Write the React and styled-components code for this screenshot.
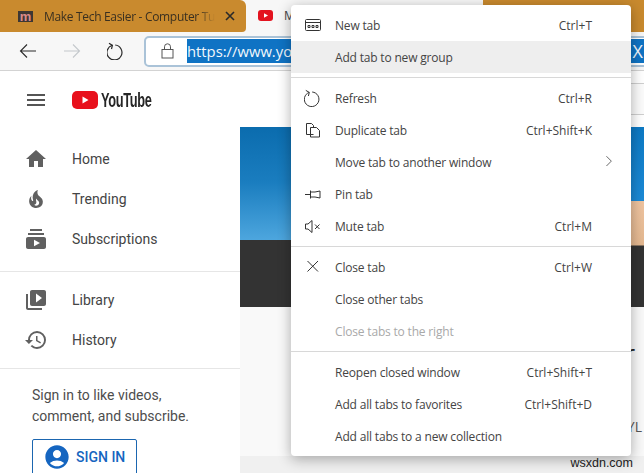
import styled, { createGlobalStyle } from "styled-components";
import {
  MdAccountCircle,
  MdHistory,
  MdHome,
  MdMenu,
  MdSubscriptions,
  MdVideoLibrary,
} from "react-icons/md";

const GlobalStyle = createGlobalStyle`
  html, body {
    margin: 0;
    height: 473px;
    overflow: hidden;
    background: #fff;
  }
`;

const FlameIcon = () => (
  <svg width="24" height="24" viewBox="0 0 24 24" fill="currentColor">
    <path d="M17.53 11.2c-.23-.3-.5-.56-.76-.82-.65-.6-1.4-1.03-2.03-1.66C13.3 7.26 13 4.85 13.91 3c-.91.23-1.75.75-2.45 1.32-2.54 2.08-3.54 5.75-2.34 8.9.04.1.08.2.08.33 0 .22-.15.42-.35.5-.22.1-.46.04-.64-.12-.06-.05-.1-.1-.15-.17-1.1-1.43-1.28-3.48-.53-5.12C5.89 10 5 12.3 5.14 14.47c.04.5.1 1 .27 1.5.14.6.4 1.2.72 1.73 1.04 1.73 2.87 2.97 4.84 3.22 2.1.27 4.35-.12 5.96-1.6 1.8-1.66 2.45-4.32 1.5-6.6l-.13-.26c-.2-.46-.47-.87-.8-1.25zM14.17 18c-.28.24-.73.5-1.08.6-1.1.4-2.2-.16-2.87-.82 1.19-.28 1.9-1.16 2.11-2.05.17-.8-.15-1.46-.28-2.23-.12-.74-.1-1.37.17-2.06.19.38.39.76.63 1.06.77 1 1.98 1.44 2.24 2.8.04.14.06.28.06.43.03.82-.33 1.72-.98 2.27z" />
  </svg>
);

const Line = ({ children, size = 18 }) => (
  <svg width={size} height={size} viewBox="0 0 18 18" fill="none" stroke="currentColor" strokeWidth="1">
    {children}
  </svg>
);

const NewTabIcon = () => (
  <Line>
    <rect x="1.5" y="3.5" width="15" height="11" rx="1" />
    <path d="M1.5 6.5h15" />
    <path d="M4 9.5h2v2H4zM8 9.5h2v2H8zM12 9.5h2v2h-2z" />
  </Line>
);
const RefreshIcon = () => (
  <Line>
    <path d="M5.2 3.4a7.3 7.3 0 1 0 3-.4" />
    <path d="M1.8 1.4 5.3 3.4 4.4 7" />
  </Line>
);
const DuplicateIcon = () => (
  <Line>
    <path d="M9.5 13.5H2.5V2.5h5l2 2v2" />
    <path d="M6.5 6.5h6l3 3v6.5h-9z" />
  </Line>
);
const PinIcon = () => (
  <Line>
    <path d="M1 9.5h5.5M6.5 5.5v8M6.5 7h4.5l5-1v7l-5-1H6.5" />
  </Line>
);
const MuteIcon = () => (
  <Line>
    <path d="M1.5 7v5h2.5l4 3.5v-12L4 7z" />
    <path d="m11 7.5 4.5 4.5M15.5 7.5 11 12" />
  </Line>
);
const CloseIcon = () => (
  <Line>
    <path d="m3.5 3 10.5 10.5M14 3 3.5 13.5" />
  </Line>
);
const ChevronIcon = () => (
  <Line size={16}>
    <path d="m5 2.5 5.5 5.5L5 13.5" />
  </Line>
);

const navTop = [
  { label: "Home", Icon: MdHome },
  { label: "Trending", Icon: FlameIcon },
  { label: "Subscriptions", Icon: MdSubscriptions },
];
const navBottom = [
  { label: "Library", Icon: MdVideoLibrary },
  { label: "History", Icon: MdHistory },
];

const menuGroups = [
  [
    { label: "New tab", shortcut: "Ctrl+T", Icon: NewTabIcon },
    { label: "Add tab to new group", active: true },
  ],
  [
    { label: "Refresh", shortcut: "Ctrl+R", Icon: RefreshIcon },
    { label: "Duplicate tab", shortcut: "Ctrl+Shift+K", Icon: DuplicateIcon },
    { label: "Move tab to another window", submenu: true },
    { label: "Pin tab", Icon: PinIcon },
    { label: "Mute tab", shortcut: "Ctrl+M", Icon: MuteIcon },
  ],
  [
    { label: "Close tab", shortcut: "Ctrl+W", Icon: CloseIcon },
    { label: "Close other tabs" },
    { label: "Close tabs to the right", disabled: true },
  ],
  [
    { label: "Reopen closed window", shortcut: "Ctrl+Shift+T" },
    { label: "Add all tabs to favorites", shortcut: "Ctrl+Shift+D" },
    { label: "Add all tabs to a new collection" },
  ],
];

function NavList({ items, $compact }) {
  return (
    <NavGroup $compact={$compact}>
      {items.map(({ label, Icon }) => (
        <NavRow key={label}>
          <NavIcon>
            <Icon size={24} />
          </NavIcon>
          {label}
        </NavRow>
      ))}
    </NavGroup>
  );
}

export default function App() {
  return (
    <Browser>
      <GlobalStyle />

      <TabStrip>
        <OtherTab>
          <SiteBadge>m</SiteBadge>
          <TabTitle>Make Tech Easier - Computer Tutorials</TabTitle>
          <TabClose>
            <svg width="10" height="10" viewBox="0 0 10 10" stroke="currentColor" strokeWidth="1.6">
              <path d="m1 1 8 8M9 1 1 9" />
            </svg>
          </TabClose>
        </OtherTab>
        <ActiveTab>
          <svg width="15" height="11" viewBox="0 0 15 11">
            <rect width="15" height="11" rx="3" fill="#e3131f" />
            <path d="M6 3.2v4.6L10 5.500z" fill="#fff" />
          </svg>
          <ActiveTitle>Make Tech Easier</ActiveTitle>
        </ActiveTab>
        <TabFiller />
      </TabStrip>

      <Toolbar>
        <ToolButton>
          <svg width="18" height="16" viewBox="0 0 18 16" fill="none" stroke="currentColor" strokeWidth="1.1">
            <path d="M17 8H1.500M8 1.500 1.500 8 8 14.500" />
          </svg>
        </ToolButton>
        <ToolButton $faded>
          <svg width="18" height="16" viewBox="0 0 18 16" fill="none" stroke="currentColor" strokeWidth="1.1">
            <path d="M1 8h15.500M10 1.500 16.500 8 10 14.500" />
          </svg>
        </ToolButton>
        <ToolButton>
          <svg width="18" height="18" viewBox="0 0 18 18" fill="none" stroke="currentColor" strokeWidth="1.2">
            <path d="M5.200 3.300a7.500 7.500 0 1 0 3-.3" />
            <path d="M2 1.300 5.400 3.400 4.500 7" />
          </svg>
        </ToolButton>
        <AddressBar>
          <svg width="13" height="16" viewBox="0 0 13 16" fill="none" stroke="#555" strokeWidth="1">
            <rect x="1" y="6.500" width="11" height="8.500" />
            <path d="M3.500 6.500V3.800a3 3 0 0 1 6 0v2.700" />
          </svg>
          <Selection>
            <span>https://www.youtube.com</span>
            <UrlTail>X</UrlTail>
          </Selection>
        </AddressBar>
      </Toolbar>

      <Page>
        <Sidebar>
          <Masthead>
            <MdMenu size={24} color="#555" />
            <Logo>
              <svg width="26" height="18" viewBox="0 0 26 18">
                <rect width="26" height="18" rx="5" fill="#e8101c" />
                <path d="M10.500 5.500v7l6-3.500z" fill="#fff" />
              </svg>
              <LogoText>YouTube</LogoText>
            </Logo>
          </Masthead>
          <NavList items={navTop} />
          <NavList items={navBottom} $compact />
          <SignInBlock>
            <SignInText>
              Sign in to like videos,
              <br />
              comment, and subscribe.
            </SignInText>
            <SignInButton>
              <MdAccountCircle size={28} />
              SIGN IN
            </SignInButton>
          </SignInBlock>
        </Sidebar>

        <Main>
          <SearchRow>
            <SearchBox />
          </SearchRow>
          <Hero>
            <PhotoLeft />
            <PhotoRight />
          </Hero>
          <Details>
            <VideoTitle>r</VideoTitle>
            <Channel>YL</Channel>
          </Details>
          <Footer>wsxdn.com</Footer>
        </Main>
      </Page>

      <Menu>
        {menuGroups.map((group) => (
          <MenuGroup key={group[0].label}>
            {group.map(({ label, shortcut, Icon, active, disabled, submenu }) => (
              <MenuRow key={label} $active={active} $disabled={disabled}>
                <MenuIcon>{Icon && <Icon />}</MenuIcon>
                <MenuLabel>{label}</MenuLabel>
                {shortcut && <Shortcut>{shortcut}</Shortcut>}
                {submenu && (
                  <Submenu>
                    <ChevronIcon />
                  </Submenu>
                )}
              </MenuRow>
            ))}
          </MenuGroup>
        ))}
      </Menu>
    </Browser>
  );
}

const Browser = styled.div`
  position: relative;
  width: 644px;
  height: 473px;
  overflow: hidden;
  display: flex;
  flex-direction: column;
  font-family: "Open Sans", "Liberation Sans", sans-serif;
  background: #fff;
`;

const TabStrip = styled.div`
  display: flex;
  height: 32px;
  flex: none;
  background: #f7f7f7;
`;

const OtherTab = styled.div`
  display: flex;
  align-items: center;
  width: 246px;
  padding-left: 18px;
  box-sizing: border-box;
  background: #c98a2e;
  border-bottom-right-radius: 4px;
  border-top-right-radius: 6px;
  color: #3a3020;
`;

const SiteBadge = styled.span`
  display: flex;
  align-items: center;
  justify-content: center;
  flex: none;
  width: 15px;
  height: 11px;
  background: #3d3733;
  color: #d98a88;
  font: 700 13px/11px "Liberation Sans", sans-serif;
`;

const TabTitle = styled.span`
  flex: none;
  width: 171px;
  margin-left: 11px;
  overflow: hidden;
  white-space: nowrap;
  font-size: 12px;
  letter-spacing: -0.32px;
  -webkit-mask-image: linear-gradient(to right, #000 90%, transparent);
  mask-image: linear-gradient(to right, #000 90%, transparent);
`;

const TabClose = styled.span`
  display: flex;
  margin-left: 10px;
  color: #2a2a2a;
`;

const ActiveTab = styled.div`
  display: flex;
  align-items: center;
  width: 237px;
  padding: 0 0 2px 12px;
  box-sizing: border-box;
  color: #444;
`;

const ActiveTitle = styled.span`
  margin-left: 11px;
  font-size: 12px;
  white-space: nowrap;
`;

const TabFiller = styled.div`
  flex: 1;
  background: #c98a2e;
  border-bottom-left-radius: 4px;
`;

const Toolbar = styled.div`
  display: flex;
  align-items: center;
  height: 38px;
  flex: none;
  padding-left: 6px;
  background: #f7f7f7;
  border-bottom: 1px solid #d3d3d3;
`;

const ToolButton = styled.div`
  display: flex;
  align-items: center;
  justify-content: center;
  width: 44px;
  color: ${(p) => (p.$faded ? "#c4c8cc" : "#2b2b2b")};
`;

const AddressBar = styled.div`
  display: flex;
  align-items: center;
  flex: 1;
  height: 31px;
  margin: 0 -8px 0 6px;
  padding-left: 15px;
  box-sizing: border-box;
  background: #fff;
  border: 2px solid #aac3d8;
  border-radius: 5px;
`;

const Selection = styled.div`
  display: flex;
  justify-content: space-between;
  flex: 1;
  height: 24px;
  margin-left: 13px;
  padding-right: 7px;
  background: #0f73c4;
  color: #f2f8fc;
  font-size: 14.800px;
  line-height: 24px;
  white-space: nowrap;
`;

const UrlTail = styled.span`
  font-size: 18px;
`;

const Page = styled.div`
  display: flex;
  flex: 1;
  min-height: 0;
`;

const Sidebar = styled.aside`
  width: 240px;
  flex: none;
  font-family: Roboto, sans-serif;
  color: #444;
`;

const Masthead = styled.div`
  display: flex;
  align-items: center;
  height: 57px;
  padding-left: 24px;
`;

const Logo = styled.div`
  display: flex;
  align-items: center;
  margin-left: 24px;
`;

const LogoText = styled.span`
  display: inline-block;
  margin-left: 3px;
  font: 700 20px/20px "Liberation Sans", sans-serif;
  letter-spacing: -0.5px;
  color: #262626;
  transform: scaleX(0.64);
  transform-origin: left center;
`;

const NavGroup = styled.nav`
  padding: ${(p) => (p.$compact ? "8px 0" : "11px 0 12px")};
  border-bottom: 1px solid #e6e6e6;
`;

const NavRow = styled.div`
  display: flex;
  align-items: center;
  height: 40px;
  padding-left: 24px;
  font-size: 14px;
`;

const NavIcon = styled.span`
  display: flex;
  width: 48px;
  color: #606060;
`;

const SignInBlock = styled.div`
  padding: 16px 0 0 32px;
`;

const SignInText = styled.p`
  margin: 0;
  font-size: 14px;
  line-height: 21px;
  color: #4d4d4d;
`;

const SignInButton = styled.div`
  display: inline-flex;
  align-items: center;
  gap: 5px;
  width: 105px;
  height: 36px;
  margin-top: 12px;
  padding-left: 10px;
  box-sizing: border-box;
  border: 1px solid #1b66b0;
  border-radius: 2px;
  font-size: 14px;
  font-weight: 500;
  color: #1565c0;
`;

const Main = styled.main`
  display: flex;
  flex-direction: column;
  flex: 1;
  min-width: 0;
`;

const SearchRow = styled.div`
  display: flex;
  justify-content: flex-end;
  height: 56px;
  padding-top: 12px;
  box-sizing: border-box;
`;

const SearchBox = styled.div`
  width: 200px;
  height: 30px;
  background: #fbfbfb;
  border-top: 1px solid #cfcfcf;
  border-bottom: 1px solid #cfcfcf;
`;

const Hero = styled.div`
  display: flex;
  height: 180px;
  flex: none;
`;

const PhotoLeft = styled.div`
  flex: 1;
  background: linear-gradient(
    to bottom,
    #0b6cae 0,
    #1a7dbf 55px,
    #4da6de 113px,
    #333 113px,
    #333 100%
  );
`;

const PhotoRight = styled.div`
  width: 100px;
  background: linear-gradient(
    to bottom,
    #0d79c4 0,
    #1c8ad6 74px,
    #efc4a0 74px,
    #e4b890 118px,
    #333 119px,
    #333 100%
  );
`;

const Details = styled.div`
  display: flex;
  flex-direction: column;
  align-items: flex-end;
  height: 149px;
  box-sizing: border-box;
  padding: 33px 2px 0 0;
  background: #f9f9f9;
  color: #222;
`;

const VideoTitle = styled.div`
  margin-right: 7px;
  font-size: 24px;
  line-height: 26px;
`;

const Channel = styled.div`
  margin-top: 52px;
  font-size: 14px;
  line-height: 18px;
  color: #555;
`;

const Footer = styled.div`
  flex: 1;
  padding-right: 11px;
  background: #f0f0f0;
  color: #222;
  font: 12.500px/14px "Liberation Sans", sans-serif;
  text-align: right;
`;

const Menu = styled.div`
  position: absolute;
  top: 5px;
  left: 291px;
  width: 340px;
  padding: 4px 0;
  box-sizing: border-box;
  background: #fff;
  border-radius: 4px;
  box-shadow: 0 3px 14px rgba(0, 0, 0, 0.32);
`;

const MenuGroup = styled.div`
  & + & {
    margin-top: 4px;
    padding-top: 4px;
    border-top: 1px solid #d8d8d8;
  }
`;

const MenuRow = styled.div`
  display: flex;
  align-items: center;
  height: 32px;
  padding-left: 13px;
  font-size: 12px;
  background: ${(p) => (p.$active ? "#eeeeee" : "transparent")};
  color: ${(p) => (p.$disabled ? "#a9a9a9" : "#444")};
`;

const MenuIcon = styled.span`
  display: flex;
  flex: none;
  width: 31px;
  color: #333;
`;

const MenuLabel = styled.span`
  flex: 1;
  padding-top: 1px;
  letter-spacing: -0.18px;
  white-space: nowrap;
`;

const Shortcut = styled.span`
  margin-right: 39px;
  padding-top: 1px;
  white-space: nowrap;
`;

const Submenu = styled.span`
  display: flex;
  margin-right: 13px;
  color: #555;
`;
